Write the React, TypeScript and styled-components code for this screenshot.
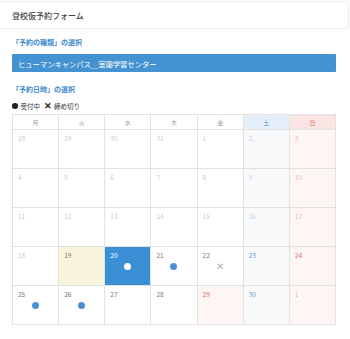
import React from "react";
import styled, { createGlobalStyle } from "styled-components";

const Global = createGlobalStyle`
  html, body { margin: 0; padding: 0; background: #fff; }
  body { font-family: "Noto Sans CJK JP", "Noto Sans", sans-serif; color: #333; }
`;

const Page = styled.div`
  width: 350px;
  height: 339px;
  overflow: hidden;
  background: #fff;
`;

const TopBar = styled.div`
  margin: 2px 2px 0 -4px;
  height: 26px;
  display: flex;
  align-items: center;
  padding-left: 16px;
  font-size: 8px;
  font-weight: 500;
  color: #444;
  border-radius: 0 3px 3px 0;
  box-shadow: 0 0 2px rgba(0, 0, 0, 0.25);
`;

const Body = styled.div`
  padding: 0 14px 0 12px;
  display: flex;
  flex-direction: column;
`;

const SectionTitle = styled.div<{ $top: number }>`
  margin-top: ${(p) => p.$top}px;
  font-size: 7px;
  font-weight: 700;
  color: #3b8ad0;
  line-height: 10px;
`;

const SelectBar = styled.div`
  margin-top: 7px;
  height: 18px;
  background: #4393d2;
  border-radius: 1px;
  color: #fff;
  font-size: 7.4px;
  display: flex;
  align-items: center;
  padding-left: 6px;
  letter-spacing: -0.1px;
`;

const Legend = styled.div`
  margin-top: 8px;
  display: flex;
  align-items: center;
  font-size: 6.5px;
  color: #333;
  height: 8px;
  gap: 2px;
`;

const LegendDot = styled.span`
  width: 5.5px;
  height: 5.5px;
  border-radius: 50%;
  background: #222;
  margin-right: 1px;
`;

const LegendX = styled.span`
  font-size: 9px;
  font-weight: 700;
  color: #222;
  margin-left: 2px;
  line-height: 8px;
`;

const Calendar = styled.div`
  margin-top: 4px;
  display: grid;
  grid-template-columns: repeat(7, 1fr);
  grid-template-rows: 15px repeat(5, 39px);
  border-top: 1px solid #e2e2e2;
  border-left: 1px solid #e2e2e2;
`;

type Kind = "wd" | "sat" | "sun";

const headBg: Record<Kind, string> = { wd: "#fff", sat: "#e6eef9", sun: "#fbe4e4" };
const headColor: Record<Kind, string> = { wd: "#999", sat: "#5b8fd0", sun: "#e06a6a" };

const HeadCell = styled.div<{ $k: Kind }>`
  border-right: 1px solid #e2e2e2;
  border-bottom: 1px solid #e2e2e2;
  background: ${(p) => headBg[p.$k]};
  color: ${(p) => headColor[p.$k]};
  font-size: 6px;
  display: flex;
  align-items: center;
  justify-content: center;
`;

type CellState = "past" | "today" | "selected" | "normal";

const cellBg = (k: Kind, s: CellState, holiday: boolean) => {
  if (s === "selected") return "#3b8fd4";
  if (s === "today") return "#f8f4db";
  if (k === "sun" || holiday) return "#fdf6f4";
  if (k === "sat") return "#f8f9fb";
  return "#fff";
};

const numColor = (k: Kind, s: CellState, holiday: boolean) => {
  if (s === "selected") return "#fff";
  const red = k === "sun" || holiday;
  if (s === "past") return red ? "#f0b8b4" : k === "sat" ? "#c2d4ec" : "#cacaca";
  if (red) return "#e06464";
  if (k === "sat") return "#5e98d6";
  return "#777";
};

const Cell = styled.div<{ $bg: string }>`
  border-right: 1px solid #e2e2e2;
  border-bottom: 1px solid #e2e2e2;
  background: ${(p) => p.$bg};
  display: flex;
  flex-direction: column;
  align-items: center;
`;

const Num = styled.div<{ $c: string }>`
  align-self: flex-start;
  margin: 4px 0 0 5px;
  font-size: 6.5px;
  line-height: 8px;
  color: ${(p) => p.$c};
`;

const Dot = styled.div<{ $white?: boolean }>`
  margin-top: 4px;
  width: 7px;
  height: 7px;
  border-radius: 50%;
  background: ${(p) => (p.$white ? "#fff" : "#4a90d6")};
`;

const Closed = styled.div`
  margin-top: 1px;
  font-size: 10px;
  line-height: 12px;
  color: #b0b0b0;
  font-weight: 300;
`;

type Day = {
  n: number;
  s: CellState;
  holiday?: boolean;
  mark?: "open" | "closed";
};

const heads: [string, Kind][] = [
  ["月", "wd"],
  ["火", "wd"],
  ["水", "wd"],
  ["木", "wd"],
  ["金", "wd"],
  ["土", "sat"],
  ["日", "sun"],
];

const p = (n: number): Day => ({ n, s: "past" });

const days: Day[] = [
  p(28), p(29), p(30), p(31), p(1), p(2), p(3),
  p(4), p(5), p(6), p(7), p(8), p(9), p(10),
  p(11), p(12), p(13), p(14), p(15), p(16), p(17),
  p(18),
  { n: 19, s: "today" },
  { n: 20, s: "selected", mark: "open" },
  { n: 21, s: "normal", mark: "open" },
  { n: 22, s: "normal", mark: "closed" },
  { n: 23, s: "normal" },
  { n: 24, s: "normal" },
  { n: 25, s: "normal", mark: "open" },
  { n: 26, s: "normal", mark: "open" },
  { n: 27, s: "normal" },
  { n: 28, s: "normal" },
  { n: 29, s: "normal", holiday: true },
  { n: 30, s: "normal" },
  { n: 1, s: "past" },
];

export default function App() {
  return (
    <Page>
      <Global />
      <TopBar>登校仮予約フォーム</TopBar>
      <Body>
        <SectionTitle $top={9}>「予約の種類」の選択</SectionTitle>
        <SelectBar>ヒューマンキャンパス＿室蘭学習センター</SelectBar>
        <SectionTitle $top={12}>「予約日時」の選択</SectionTitle>
        <Legend>
          <LegendDot />
          受付中
          <LegendX>✕</LegendX>
          締め切り
        </Legend>
        <Calendar>
          {heads.map(([label, k]) => (
            <HeadCell key={label} $k={k}>
              {label}
            </HeadCell>
          ))}
          {days.map((d, i) => {
            const k = heads[i % 7][1];
            const hol = !!d.holiday;
            return (
              <Cell key={i} $bg={cellBg(k, d.s, hol)}>
                <Num $c={numColor(k, d.s, hol)}>{d.n}</Num>
                {d.mark === "open" && <Dot $white={d.s === "selected"} />}
                {d.mark === "closed" && <Closed>✕</Closed>}
              </Cell>
            );
          })}
        </Calendar>
      </Body>
    </Page>
  );
}
